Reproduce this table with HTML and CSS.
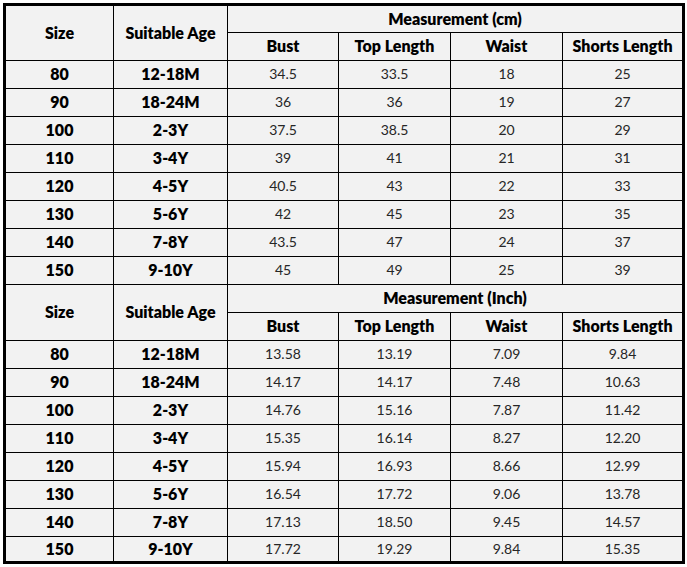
FILE: index.html
```html
<!DOCTYPE html>
<html>
<head>
<meta charset="utf-8">
<link rel="stylesheet" href="styles.css">
</head>
<body>
<table class="chart">
  <colgroup>
    <col class="c-size"><col class="c-age"><col class="c-bust"><col class="c-top"><col class="c-waist"><col class="c-shorts">
  </colgroup>
  <tbody>
    <tr class="h1 first">
      <td class="hd" rowspan="2">Size</td>
      <td class="hd" rowspan="2">Suitable Age</td>
      <td class="hd last" colspan="4">Measurement (cm)</td>
    </tr>
    <tr class="h2">
      <td class="hd">Bust</td><td class="hd">Top Length</td><td class="hd">Waist</td><td class="hd last">Shorts Length</td>
    </tr>
    <tr><td class="b">80</td><td class="b">12-18M</td><td>34.5</td><td>33.5</td><td>18</td><td class="last">25</td></tr>
    <tr><td class="b">90</td><td class="b">18-24M</td><td>36</td><td>36</td><td>19</td><td class="last">27</td></tr>
    <tr><td class="b">100</td><td class="b">2-3Y</td><td>37.5</td><td>38.5</td><td>20</td><td class="last">29</td></tr>
    <tr><td class="b">110</td><td class="b">3-4Y</td><td>39</td><td>41</td><td>21</td><td class="last">31</td></tr>
    <tr><td class="b">120</td><td class="b">4-5Y</td><td>40.5</td><td>43</td><td>22</td><td class="last">33</td></tr>
    <tr><td class="b">130</td><td class="b">5-6Y</td><td>42</td><td>45</td><td>23</td><td class="last">35</td></tr>
    <tr><td class="b">140</td><td class="b">7-8Y</td><td>43.5</td><td>47</td><td>24</td><td class="last">37</td></tr>
    <tr><td class="b">150</td><td class="b">9-10Y</td><td>45</td><td>49</td><td>25</td><td class="last">39</td></tr>
    <tr class="h1">
      <td class="hd" rowspan="2">Size</td>
      <td class="hd" rowspan="2">Suitable Age</td>
      <td class="hd last" colspan="4">Measurement (Inch)</td>
    </tr>
    <tr class="h2">
      <td class="hd">Bust</td><td class="hd">Top Length</td><td class="hd">Waist</td><td class="hd last">Shorts Length</td>
    </tr>
    <tr><td class="b">80</td><td class="b">12-18M</td><td>13.58</td><td>13.19</td><td>7.09</td><td class="last">9.84</td></tr>
    <tr><td class="b">90</td><td class="b">18-24M</td><td>14.17</td><td>14.17</td><td>7.48</td><td class="last">10.63</td></tr>
    <tr><td class="b">100</td><td class="b">2-3Y</td><td>14.76</td><td>15.16</td><td>7.87</td><td class="last">11.42</td></tr>
    <tr><td class="b">110</td><td class="b">3-4Y</td><td>15.35</td><td>16.14</td><td>8.27</td><td class="last">12.20</td></tr>
    <tr><td class="b">120</td><td class="b">4-5Y</td><td>15.94</td><td>16.93</td><td>8.66</td><td class="last">12.99</td></tr>
    <tr><td class="b">130</td><td class="b">5-6Y</td><td>16.54</td><td>17.72</td><td>9.06</td><td class="last">13.78</td></tr>
    <tr><td class="b">140</td><td class="b">7-8Y</td><td>17.13</td><td>18.50</td><td>9.45</td><td class="last">14.57</td></tr>
    <tr class="end"><td class="b">150</td><td class="b">9-10Y</td><td>17.72</td><td>19.29</td><td>9.84</td><td class="last">15.35</td></tr>
  </tbody>
</table>
</body>
</html>
```
FILE: styles.css
```css
html, body {
  margin: 0;
  padding: 0;
  background: #ffffff;
}
body {
  padding: 3px;
}
.chart {
  border-collapse: separate;
  border-spacing: 0;
  border: 3px solid #000;
  table-layout: fixed;
  width: 682px;
  background: #f2f2f2;
  font-family: Lato, "Open Sans", "Liberation Sans", sans-serif;
}
.c-size { width: 108px; }
.c-age { width: 114px; }
.c-bust { width: 111px; }
.c-top { width: 112px; }
.c-waist { width: 112px; }
.c-shorts { width: 119px; }
.chart td {
  box-sizing: border-box;
  height: 28px;
  padding: 0 0 1px;
  border-right: 1px solid #000;
  border-bottom: 1px solid #000;
  text-align: center;
  vertical-align: middle;
  font-size: 14px;
  color: #262626;
  line-height: 16px;
}
.chart td.last {
  border-right: none;
}
.chart tr.first td {
  height: 27px;
}
.chart tr.end td {
  border-bottom: none;
  height: 24px;
}
.chart td.hd,
.chart td.b {
  font-weight: 800;
  color: #000;
  font-size: 16px;
}
```
